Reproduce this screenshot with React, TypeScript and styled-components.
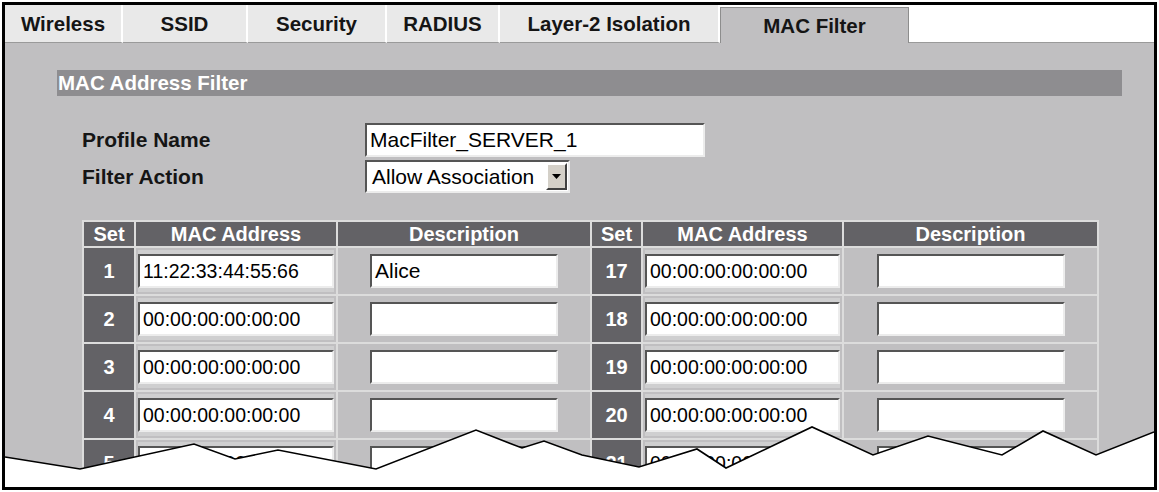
import React from 'react';
import styled, { createGlobalStyle } from 'styled-components';

const GlobalStyle = createGlobalStyle`
  body {
    margin: 0;
    background: #ffffff;
    font-family: 'Liberation Sans', Arial, sans-serif;
  }
`;

const Frame = styled.div`
  position: relative;
  box-sizing: border-box;
  width: 1155px;
  height: 488px;
  margin: 2px 0 0 2px;
  border: 3px solid #000;
  overflow: hidden;
  display: flex;
  flex-direction: column;
  background: #fff;
`;

const TabBar = styled.div`
  display: flex;
  height: 38px;
  flex-shrink: 0;
`;

const Tab = styled.div<{ $width: number; $active?: boolean }>`
  box-sizing: border-box;
  width: ${(p) => p.$width}px;
  display: flex;
  align-items: center;
  justify-content: center;
  font-size: 20.5px;
  font-weight: bold;
  color: #151515;
  white-space: nowrap;
  background: ${(p) => (p.$active ? '#c0bfc1' : '#e9e9e9')};
  border-right: 2px solid #fff;
  border-bottom: 1px solid #9a9a9a;
  ${(p) =>
    p.$active &&
    `
    margin-top: 2px;
    border: 1px solid #8d8d8d;
    border-bottom: none;
  `}
`;

const TabFiller = styled.div`
  flex: 1;
  border-bottom: 1px solid #9a9a9a;
`;

const Content = styled.div`
  flex: 1;
  background: #c0bfc1;
  padding: 27px 32px 0 52px;
`;

const SectionBar = styled.div`
  height: 26px;
  line-height: 26px;
  padding-left: 1px;
  background: #8e8d90;
  color: #fff;
  font-size: 20.5px;
  font-weight: bold;
`;

const Form = styled.div`
  display: grid;
  grid-template-columns: 283px auto;
  row-gap: 3px;
  margin: 27px 0 0 25px;
  justify-items: start;
`;

const Label = styled.div`
  align-self: center;
  font-size: 21px;
  font-weight: bold;
  color: #151515;
`;

const insetBorder = `
  box-sizing: border-box;
  border-top: 2px solid #555;
  border-left: 2px solid #555;
  border-bottom: 2px solid #ececec;
  border-right: 2px solid #ececec;
  background: #fff;
`;

const TextField = styled.div<{ $width: string; $size?: number }>`
  ${insetBorder}
  width: ${(p) => p.$width};
  height: 34px;
  padding: 0 3px;
  display: flex;
  align-items: center;
  font-size: ${(p) => p.$size ?? 21}px;
  color: #000;
  white-space: nowrap;
  overflow: hidden;
`;

const SelectBox = styled.div`
  ${insetBorder}
  width: 205px;
  height: 33px;
  padding-left: 5px;
  display: flex;
  align-items: center;
  justify-content: space-between;
  font-size: 21px;
  color: #000;
  white-space: nowrap;
`;

const DropButton = styled.div`
  box-sizing: border-box;
  width: 21px;
  height: 27px;
  margin-right: 1px;
  display: flex;
  align-items: center;
  justify-content: center;
  background: #d4d0c8;
  border-top: 2px solid #fff;
  border-left: 2px solid #fff;
  border-bottom: 2px solid #404040;
  border-right: 2px solid #404040;
`;

const Table = styled.table`
  margin: 27px 0 0 25px;
  width: 1015px;
  border-collapse: collapse;
  table-layout: fixed;
`;

const HeadCell = styled.th`
  height: 24px;
  padding: 0;
  border: 2px solid #dcdcdc;
  background: #636266;
  color: #fff;
  font-size: 20px;
  font-weight: bold;
  text-align: center;
  vertical-align: bottom;
`;

const SetCell = styled.td`
  height: 46px;
  padding: 0;
  border: 2px solid #dcdcdc;
  background: #636266;
  color: #fff;
  font-size: 20px;
  font-weight: bold;
  text-align: center;
`;

const MacCell = styled.td`
  padding: 0 2px;
  border: 2px solid #dcdcdc;
  background: #c0bfc1;
  & > div {
    box-shadow: 0 -4px 0 #cfcfd0, 0 4px 0 #cfcfd0;
  }
`;

const DescCell = styled.td`
  padding: 0;
  border: 2px solid #dcdcdc;
  background: #c0bfc1;
  & > div {
    margin: 0 auto;
  }
`;

const Tear = styled.svg`
  position: absolute;
  left: 0;
  top: 0;
  width: 1149px;
  height: 482px;
  pointer-events: none;
`;

const tabs = [
  { label: 'Wireless', width: 118 },
  { label: 'SSID', width: 125 },
  { label: 'Security', width: 139 },
  { label: 'RADIUS', width: 113 },
  { label: 'Layer-2 Isolation', width: 220 },
  { label: 'MAC Filter', width: 189, active: true },
];

const ZERO = '00:00:00:00:00:00';

const rows = [1, 2, 3, 4, 5].map((n) => ({
  left: { set: n, mac: n === 1 ? '11:22:33:44:55:66' : ZERO, desc: n === 1 ? 'Alice' : '' },
  right: { set: n + 16, mac: ZERO, desc: '' },
}));

const tearPoints: [number, number][] = [
  [5, 457], [80, 469], [194, 444], [235, 459], [278, 450], [376, 469],
  [476, 430], [522, 448], [544, 441], [582, 455], [639, 467], [697, 449],
  [726, 468], [812, 427], [873, 455], [928, 436], [1002, 455], [1043, 431],
  [1096, 455], [1154, 432],
];

const Entry = ({ set, mac, desc }: { set: number; mac: string; desc: string }) => (
  <>
    <SetCell>{set}</SetCell>
    <MacCell>
      <TextField $width="100%" $size={19.5}>{mac}</TextField>
    </MacCell>
    <DescCell>
      <TextField $width="188px">{desc}</TextField>
    </DescCell>
  </>
);

const App = () => {
  const line = tearPoints.map((p) => p.join(',')).join(' ');
  return (
    <>
      <GlobalStyle />
      <Frame>
        <TabBar>
          {tabs.map((t) => (
            <Tab key={t.label} $width={t.width} $active={t.active}>
              {t.label}
            </Tab>
          ))}
          <TabFiller />
        </TabBar>
        <Content>
          <SectionBar>MAC Address Filter</SectionBar>
          <Form>
            <Label>Profile Name</Label>
            <TextField $width="340px">MacFilter_SERVER_1</TextField>
            <Label>Filter Action</Label>
            <SelectBox>
              Allow Association
              <DropButton>
                <svg width="9" height="5" viewBox="0 0 9 5">
                  <polygon points="0,0 9,0 4.5,5" fill="#000" />
                </svg>
              </DropButton>
            </SelectBox>
          </Form>
          <Table>
            <colgroup>
              <col style={{ width: 52 }} />
              <col style={{ width: 202 }} />
              <col style={{ width: 254 }} />
              <col style={{ width: 51 }} />
              <col style={{ width: 201 }} />
              <col style={{ width: 255 }} />
            </colgroup>
            <thead>
              <tr>
                <HeadCell>Set</HeadCell>
                <HeadCell>MAC Address</HeadCell>
                <HeadCell>Description</HeadCell>
                <HeadCell>Set</HeadCell>
                <HeadCell>MAC Address</HeadCell>
                <HeadCell>Description</HeadCell>
              </tr>
            </thead>
            <tbody>
              {rows.map((r) => (
                <tr key={r.left.set}>
                  <Entry {...r.left} />
                  <Entry {...r.right} />
                </tr>
              ))}
            </tbody>
          </Table>
        </Content>
        <Tear viewBox="5 5 1149 482">
          <polygon points={`${line} 1154,487 5,487`} fill="#fff" />
          <polyline points={line} fill="none" stroke="#000" strokeWidth="1.6" />
        </Tear>
      </Frame>
    </>
  );
};

export default App;
